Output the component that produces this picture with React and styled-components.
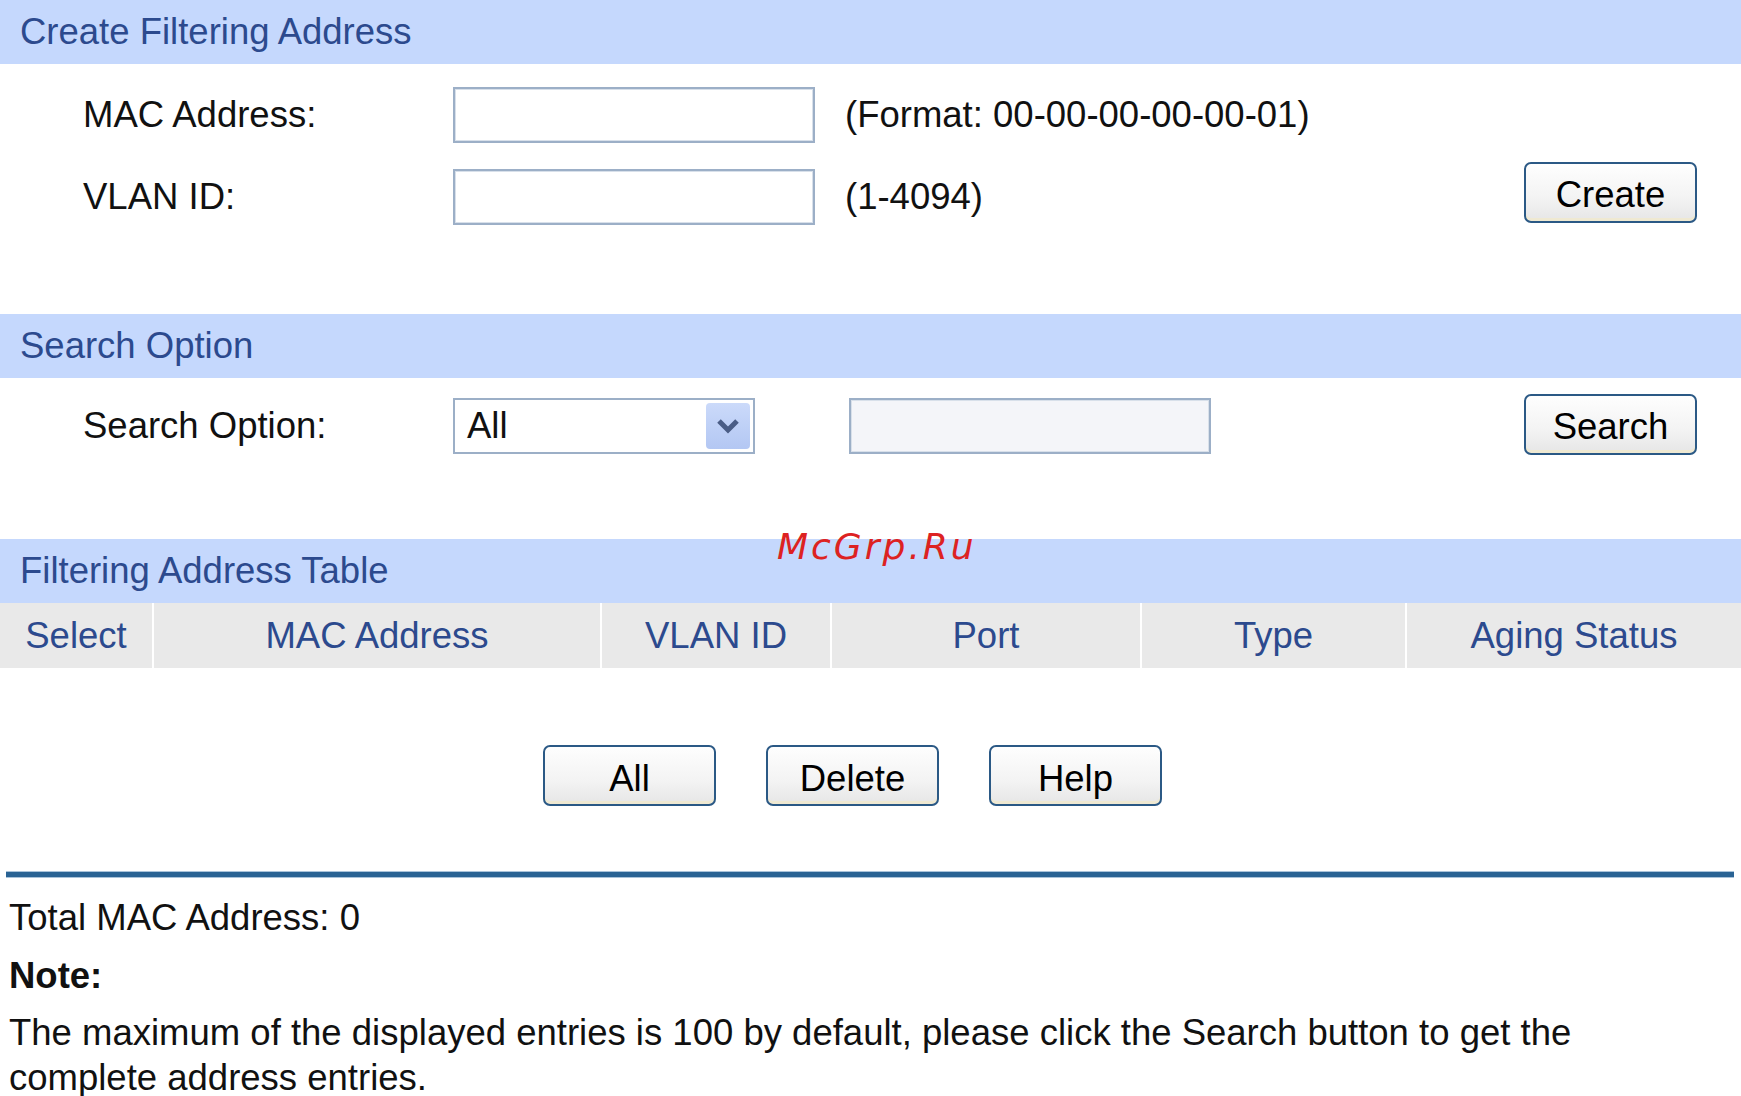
import React from 'react';
import styled, { createGlobalStyle } from 'styled-components';

const GlobalStyle = createGlobalStyle`
  body {
    margin: 0;
    background: #fff;
    font-family: "Liberation Sans", Arial, sans-serif;
    font-size: 36.5px;
    color: #111;
  }
`;

const Page = styled.div`
  position: relative;
  width: 1741px;
`;

const SectionHeader = styled.div`
  height: 64px;
  display: flex;
  align-items: center;
  padding-left: 20px;
  background: #c5d8fd;
  color: #2c4a8e;
  margin-top: ${(p) => p.top || 0}px;
`;

const Form = styled.div`
  display: flex;
  flex-direction: column;
  gap: ${(p) => p.gap || 0}px;
  padding-top: ${(p) => p.padTop || 0}px;
`;

const Row = styled.div`
  display: flex;
  align-items: center;
  height: 56px;
  padding-left: 83px;
  padding-right: 44px;
`;

const Label = styled.div`
  width: 370px;
`;

const TextBox = styled.input`
  box-sizing: border-box;
  width: 362px;
  height: 56px;
  border: 2px solid #9cafc7;
  outline: 1px solid #d8e0ea;
  outline-offset: -3px;
  background: ${(p) => (p.muted ? '#f4f5f9' : '#fff')};
  margin-left: ${(p) => p.offset || 0}px;
  font: inherit;
`;

const Hint = styled.div`
  margin-left: 30px;
`;

const Button = styled.button`
  box-sizing: border-box;
  width: 173px;
  height: 61px;
  border: 2px solid #2b5985;
  border-radius: 7px;
  background: linear-gradient(#fefefe 0%, #f3f3f3 60%, #e6e6e6 100%);
  box-shadow: inset 0 -3px 0 #efe9d2;
  font: inherit;
  color: #000;
  padding: 6px 0 0;
  margin-left: ${(p) => (p.push ? 'auto' : '0')};
  margin-top: ${(p) => (p.lift ? -p.lift * 2 : 0)}px;
`;

const Select = styled.div`
  box-sizing: border-box;
  width: 302px;
  height: 56px;
  border: 2px solid #9cafc7;
  display: flex;
  align-items: center;
  justify-content: space-between;
  padding: 0 3px 0 12px;
  background: #fff;
`;

const DropButton = styled.div`
  width: 44px;
  height: 46px;
  border-radius: 4px;
  background: linear-gradient(#cbdafa, #b3c7f3);
  display: flex;
  align-items: center;
  justify-content: center;
`;

const TableHead = styled.div`
  display: grid;
  grid-template-columns: 152px 446px 228px 308px 263px 1fr;
  column-gap: 2px;
  background: #fff;
`;

const HeadCell = styled.div`
  height: 65px;
  display: flex;
  align-items: center;
  justify-content: center;
  background: #e9e9e9;
  color: #2c4a8e;
`;

const Actions = styled.div`
  display: flex;
  gap: 50px;
  padding: 77px 0 0 543px;
`;

const Divider = styled.div`
  height: 5px;
  margin: 66px 7px 0 6px;
  background: #2a6394;
  box-shadow: 0 1px 0 #a9c3da, 0 -1px 0 #a9c3da;
`;

const Footer = styled.div`
  padding: 18px 0 0 9px;
  line-height: 45px;
`;

const Line = styled.div`
  margin-bottom: ${(p) => p.space || 0}px;
  font-weight: ${(p) => (p.bold ? 700 : 400)};
`;

const Note = styled.p`
  margin: 0;
  max-width: 1640px;
`;

const Watermark = styled.div`
  position: absolute;
  left: 777px;
  top: 526px;
  color: #dd2222;
  font-family: "DejaVu Sans", sans-serif;
  font-style: italic;
  font-size: 36px;
  letter-spacing: 3px;
`;

const Chevron = () => (
  <svg width="24" height="16" viewBox="0 0 24 16">
    <polyline points="3,3 12,12 21,3" fill="none" stroke="#4a5d86" strokeWidth="5" />
  </svg>
);

const columns = ['Select', 'MAC Address', 'VLAN ID', 'Port', 'Type', 'Aging Status'];

const App = () => {
  return (
    <Page>
      <GlobalStyle />
      <SectionHeader>Create Filtering Address</SectionHeader>
      <Form gap={26} padTop={23}>
        <Row>
          <Label>MAC Address:</Label>
          <TextBox />
          <Hint>(Format: 00-00-00-00-00-01)</Hint>
        </Row>
        <Row>
          <Label>VLAN ID:</Label>
          <TextBox />
          <Hint>(1-4094)</Hint>
          <Button push lift={5}>Create</Button>
        </Row>
      </Form>

      <SectionHeader top={89}>Search Option</SectionHeader>
      <Form padTop={20}>
        <Row>
          <Label>Search Option:</Label>
          <Select>
            <span>All</span>
            <DropButton>
              <Chevron />
            </DropButton>
          </Select>
          <TextBox muted offset={94} />
          <Button push lift={2}>Search</Button>
        </Row>
      </Form>

      <SectionHeader top={85}>Filtering Address Table</SectionHeader>
      <TableHead>
        {columns.map((c) => (
          <HeadCell key={c}>{c}</HeadCell>
        ))}
      </TableHead>

      <Actions>
        <Button>All</Button>
        <Button>Delete</Button>
        <Button>Help</Button>
      </Actions>

      <Divider />

      <Footer>
        <Line space={13}>Total MAC Address: 0</Line>
        <Line bold space={12}>Note:</Line>
        <Note>
          The maximum of the displayed entries is 100 by default, please click the Search button to get the
          complete address entries.
        </Note>
      </Footer>

      <Watermark>McGrp.Ru</Watermark>
    </Page>
  );
};

export default App;
